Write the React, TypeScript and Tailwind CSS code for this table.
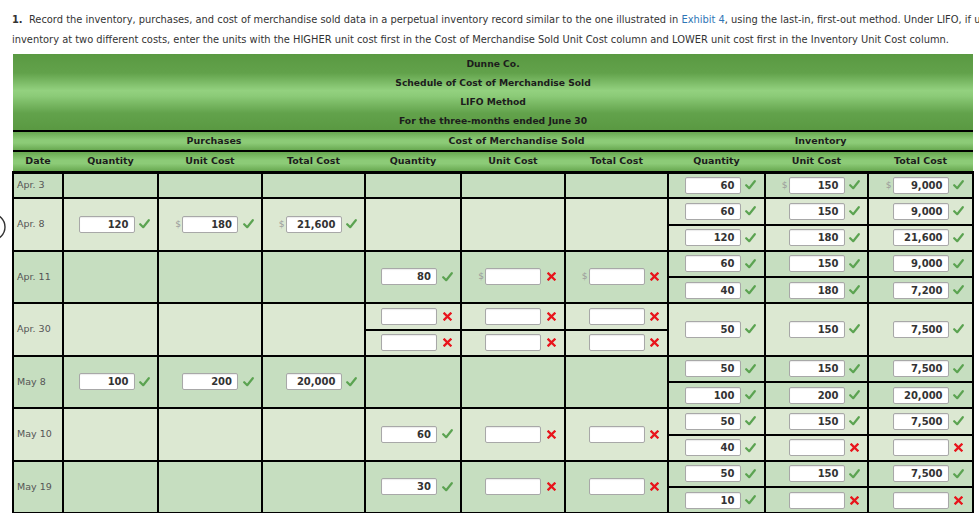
import React from "react";

type Entry = { v: string; ok: boolean; d?: boolean };
type Trio = [Entry, Entry, Entry];
type Group = { date: string; rows: 1 | 2; dark: boolean; p: Trio[]; c: Trio[]; i: Trio[] };

const e = (v: string, ok = true, d = false): Entry => ({ v, ok, d });
const blank = (d = false): Entry => ({ v: "", ok: false, d });

const groups: Group[] = [
  {
    date: "Apr. 3",
    rows: 1,
    dark: true,
    p: [],
    c: [],
    i: [[e("60"), e("150", true, true), e("9,000", true, true)]],
  },
  {
    date: "Apr. 8",
    rows: 2,
    dark: false,
    p: [[e("120"), e("180", true, true), e("21,600", true, true)]],
    c: [],
    i: [
      [e("60"), e("150"), e("9,000")],
      [e("120"), e("180"), e("21,600")],
    ],
  },
  {
    date: "Apr. 11",
    rows: 2,
    dark: true,
    p: [],
    c: [[e("80"), blank(true), blank(true)]],
    i: [
      [e("60"), e("150"), e("9,000")],
      [e("40"), e("180"), e("7,200")],
    ],
  },
  {
    date: "Apr. 30",
    rows: 2,
    dark: false,
    p: [],
    c: [
      [blank(), blank(), blank()],
      [blank(), blank(), blank()],
    ],
    i: [[e("50"), e("150"), e("7,500")]],
  },
  {
    date: "May 8",
    rows: 2,
    dark: true,
    p: [[e("100"), e("200"), e("20,000")]],
    c: [],
    i: [
      [e("50"), e("150"), e("7,500")],
      [e("100"), e("200"), e("20,000")],
    ],
  },
  {
    date: "May 10",
    rows: 2,
    dark: false,
    p: [],
    c: [[e("60"), blank(), blank()]],
    i: [
      [e("50"), e("150"), e("7,500")],
      [e("40"), blank(), blank()],
    ],
  },
  {
    date: "May 19",
    rows: 2,
    dark: true,
    p: [],
    c: [[e("30"), blank(), blank()]],
    i: [
      [e("50"), e("150"), e("7,500")],
      [e("10"), blank(), blank()],
    ],
  },
];

function Check() {
  return (
    <svg width="11" height="10" viewBox="0 0 11 10">
      <path d="M1.2 5.2 L4.2 8.2 L9.8 1.2" fill="none" stroke="#5ba351" strokeWidth="2.2" strokeLinecap="round" strokeLinejoin="round" />
    </svg>
  );
}

function Cross() {
  return (
    <svg width="9" height="9" viewBox="0 0 9 9">
      <path d="M1.5 1.5 L7.5 7.5 M7.5 1.5 L1.5 7.5" fill="none" stroke="#e8141b" strokeWidth="2.3" strokeLinecap="square" />
    </svg>
  );
}

function Field({ entry, col }: { entry?: Entry; col: number }) {
  if (!entry) return null;
  return (
    <div className="flex items-center justify-center">
      <span className={`${col === 0 ? "w-[12px]" : "w-[20px]"} text-right pr-[1px] text-[9px] text-[#9a9a9a]`}>
        {entry.d ? "$" : ""}
      </span>
      <input
        readOnly
        value={entry.v}
        className="w-[56px] h-[17px] bg-white border border-[#a8a8a8] rounded-[2px] shadow-[inset_0_1px_1px_rgba(0,0,0,0.08)] text-right pr-[5px] text-[10px] font-bold text-[#333] outline-none"
      />
      <span className="w-[20px] flex justify-center">{entry.ok ? <Check /> : <Cross />}</span>
    </div>
  );
}

const td = "border-2 border-black p-0 align-middle";

function SectionCells({ trio, span }: { trio?: Trio; span?: number }) {
  return (
    <>
      {[0, 1, 2].map((k) => (
        <td key={k} rowSpan={span} className={td}>
          <Field entry={trio?.[k]} col={k} />
        </td>
      ))}
    </>
  );
}

function GroupRows({ g }: { g: Group }) {
  const bg = g.dark ? "bg-[#c6dec0]" : "bg-[#dce8d2]";
  const sections = [g.p, g.c, g.i];
  const dateCell = (
    <td rowSpan={g.rows} className={`${td} pl-[3px] text-[9.5px] text-[#555] whitespace-nowrap`}>
      {g.date}
    </td>
  );
  if (g.rows === 1) {
    return (
      <tr className={`h-[26px] ${bg}`}>
        {dateCell}
        {sections.map((s, n) => (
          <SectionCells key={n} trio={s[0]} />
        ))}
      </tr>
    );
  }
  return (
    <>
      <tr className={`h-[26.5px] ${bg}`}>
        {dateCell}
        {sections.map((s, n) =>
          s.length === 2 ? <SectionCells key={n} trio={s[0]} /> : <SectionCells key={n} trio={s[0]} span={2} />
        )}
      </tr>
      <tr className={`h-[26px] ${bg}`}>
        {sections.map((s, n) => (s.length === 2 ? <SectionCells key={n} trio={s[1]} /> : null))}
      </tr>
    </>
  );
}

const cols = [50, 95, 104, 103, 96, 104, 103, 97, 103, 105];
const heads = ["Date", "Quantity", "Unit Cost", "Total Cost", "Quantity", "Unit Cost", "Total Cost", "Quantity", "Unit Cost", "Total Cost"];

export default function App() {
  return (
    <div className="relative w-[979px] h-[513px] overflow-hidden bg-white font-['DejaVu_Sans',Verdana,sans-serif] text-[#333]">
      <svg className="absolute left-0 top-[211px]" width="8" height="32" viewBox="0 0 8 32">
        <circle cx="-8" cy="16" r="13" fill="none" stroke="#333" strokeWidth="1.4" />
      </svg>

      <div className="pt-[10px] pl-[12px] text-[9.9px] leading-[20px] whitespace-nowrap">
        <div>
          <span className="font-bold">1.</span>&nbsp; Record the inventory, purchases, and cost of merchandise sold data in a perpetual inventory record similar to the one illustrated in{" "}
          <span className="text-[#2f75b5]">Exhibit 4</span>, using the last-in, first-out method. Under LIFO, if units
        </div>
        <div>
          inventory at two different costs, enter the units with the HIGHER unit cost first in the Cost of Merchandise Sold Unit Cost column and LOWER unit cost first in the Inventory Unit Cost column.
        </div>
      </div>

      <table className="mt-[4px] ml-[12px] w-[960px] table-fixed border-collapse">
        <colgroup>
          {cols.map((w, n) => (
            <col key={n} style={{ width: w }} />
          ))}
        </colgroup>
        <thead className="text-[9.5px] font-bold text-[#1c1c1c]">
          <tr>
            <th
              colSpan={10}
              className="h-[77px] p-0 border-b-2 border-black bg-[linear-gradient(to_bottom,#5a9942_0%,#62a24b_25%,#93d17f_48%,#8ccb78_55%,#62a24b_78%,#5a9942_100%)] text-[9.2px] leading-[19px] font-bold"
            >
              <div>Dunne Co.</div>
              <div>Schedule of Cost of Merchandise Sold</div>
              <div>LIFO Method</div>
              <div>For the three-months ended June 30</div>
            </th>
          </tr>
          <tr className="h-[20px] bg-[linear-gradient(to_bottom,#64a44c_0%,#8ccb77_45%,#8ccb77_60%,#64a44c_100%)]">
            <th className="p-0 border-b-2 border-black"></th>
            <th colSpan={3} className="p-0 border-b-2 border-black font-bold">
              Purchases
            </th>
            <th colSpan={3} className="p-0 border-b-2 border-black font-bold">
              Cost of Merchandise Sold
            </th>
            <th colSpan={3} className="p-0 border-b-2 border-black font-bold">
              Inventory
            </th>
          </tr>
          <tr className="h-[21px] bg-[linear-gradient(to_bottom,#64a44c_0%,#8ccb77_45%,#8ccb77_60%,#64a44c_100%)]">
            {heads.map((h, n) => (
              <th key={n} className="p-0 border-b-[3px] border-black font-bold">
                {h}
              </th>
            ))}
          </tr>
        </thead>
        <tbody>
          {groups.map((g) => (
            <GroupRows key={g.date} g={g} />
          ))}
        </tbody>
      </table>
    </div>
  );
}
